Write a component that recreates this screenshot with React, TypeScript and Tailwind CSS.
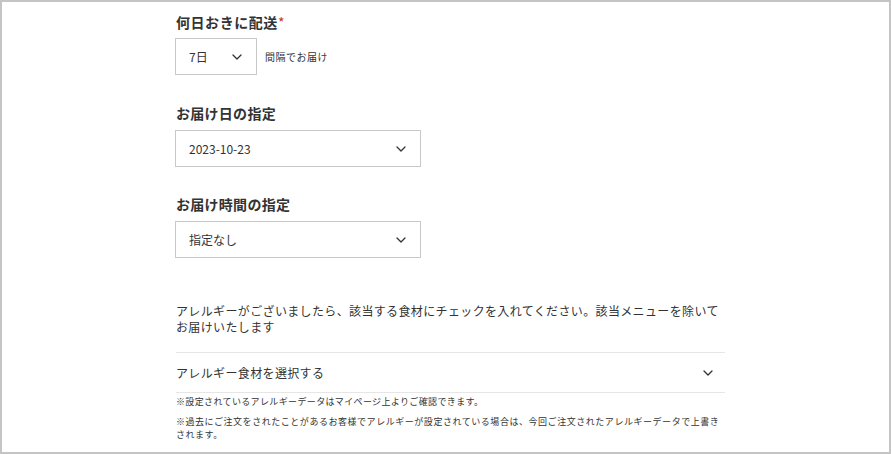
import React from "react";

const Chevron = ({ className = "" }: { className?: string }) => (
  <svg width="10" height="6" viewBox="0 0 10 6" className={className} fill="none">
    <path d="M1 1l4 4 4-4" stroke="#333" strokeWidth="1.3" strokeLinecap="round" strokeLinejoin="round" />
  </svg>
);

export default function App() {
  return (
    <div
      className="w-[891px] h-[454px] border-2 border-[#c4c4c4] bg-white text-[#333] overflow-hidden"
      style={{ fontFamily: '"Noto Sans CJK JP", "Noto Sans", sans-serif' }}
    >
      <div className="ml-[173px] w-[550px] pt-[10px]">
        <div className="pl-[1px] text-[14px] font-bold leading-[20px] tracking-[0.04em]">
          何日おきに配送<span className="text-[#c0392b] font-normal">*</span>
        </div>
        <div className="mt-[6px] flex items-center">
          <div className="w-[82px] h-[37px] border border-[#c9c9c9] flex items-center justify-between pl-[13px] pr-[14px] text-[12px]">
            <span>7日</span>
            <Chevron />
          </div>
          <span className="ml-[8px] text-[10px] tracking-[0.05em]">間隔でお届け</span>
        </div>

        <div className="mt-[28px] pl-[1px] text-[14px] font-bold leading-[20px] tracking-[0.02em]">お届け日の指定</div>
        <div className="mt-[7px] w-[246px] h-[37px] border border-[#c9c9c9] flex items-center justify-between pl-[13px] pr-[14px] text-[12px]">
          <span>2023-10-23</span>
          <Chevron />
        </div>

        <div className="mt-[27px] pl-[1px] text-[14px] font-bold leading-[20px] tracking-[0.02em]">お届け時間の指定</div>
        <div className="mt-[7px] w-[246px] h-[37px] border border-[#c9c9c9] flex items-center justify-between pl-[13px] pr-[14px] text-[12px]">
          <span>指定なし</span>
          <Chevron />
        </div>

        <p className="mt-[45px] pl-[1px] text-[12px] leading-[16px] tracking-[0.03em]">
          アレルギーがございましたら、該当する食材にチェックを入れてください。該当メニューを除いてお届けいたします
        </p>

        <div className="mt-[17px] ml-[1px] border-t border-[#e6e6e6] border-b h-[41px] flex items-center justify-between pr-[12px]">
          <span className="text-[12px] tracking-[0.03em]">アレルギー食材を選択する</span>
          <Chevron />
        </div>

        <p className="mt-[2px] pl-[1px] text-[9px] leading-[13px] tracking-[0.04em]">
          ※設定されているアレルギーデータはマイページ上よりご確認できます。
        </p>
        <p className="mt-[7px] pl-[1px] text-[9px] leading-[13px] tracking-[0.06em]">
          ※過去にご注文をされたことがあるお客様でアレルギーが設定されている場合は、今回ご注文されたアレルギーデータで上書きされます。
        </p>
      </div>
    </div>
  );
}
